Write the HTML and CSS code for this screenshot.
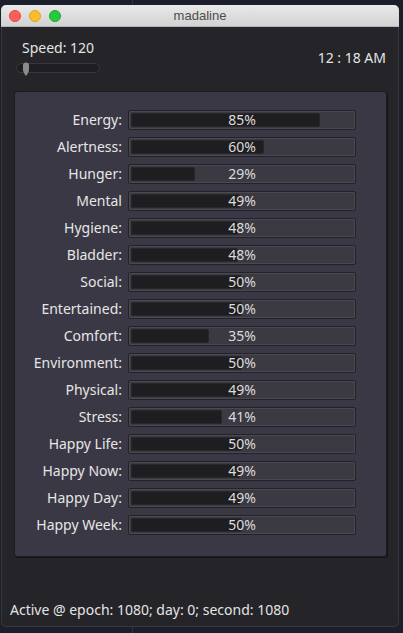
FILE: index.html
```html
<!DOCTYPE html>
<html>
<head>
<meta charset="utf-8">
<link rel="stylesheet" href="styles.css">
</head>
<body>
<div class="window">
  <div class="titlebar">
    <div class="lights">
      <span class="light red"></span>
      <span class="light yellow"></span>
      <span class="light green"></span>
    </div>
    <div class="title">madaline</div>
  </div>
  <div class="content">
    <div class="top">
      <div class="speed">
        <div class="speed-label">Speed: 120</div>
        <div class="slider">
          <svg class="grabber" width="8" height="14" viewBox="0 0 8 14"><path d="M1 3 Q1 0.5 4 0.5 Q7 0.5 7 3 L7 8 Q7 10 4.6 13.5 L3.4 13.5 Q1 10 1 8 Z" fill="#8c8c8f"/></svg>
        </div>
      </div>
      <div class="clock">12 : 18 AM</div>
    </div>
    <div class="panel">
      <div class="label">Energy:</div><div class="bar"><div class="fill" style="width:85%"></div><div class="pct">85%</div></div>
      <div class="label">Alertness:</div><div class="bar"><div class="fill" style="width:60%"></div><div class="pct">60%</div></div>
      <div class="label">Hunger:</div><div class="bar"><div class="fill" style="width:29%"></div><div class="pct">29%</div></div>
      <div class="label">Mental</div><div class="bar"><div class="fill" style="width:49%"></div><div class="pct">49%</div></div>
      <div class="label">Hygiene:</div><div class="bar"><div class="fill" style="width:48%"></div><div class="pct">48%</div></div>
      <div class="label">Bladder:</div><div class="bar"><div class="fill" style="width:48%"></div><div class="pct">48%</div></div>
      <div class="label">Social:</div><div class="bar"><div class="fill" style="width:50%"></div><div class="pct">50%</div></div>
      <div class="label">Entertained:</div><div class="bar"><div class="fill" style="width:50%"></div><div class="pct">50%</div></div>
      <div class="label">Comfort:</div><div class="bar"><div class="fill" style="width:35%"></div><div class="pct">35%</div></div>
      <div class="label">Environment:</div><div class="bar"><div class="fill" style="width:50%"></div><div class="pct">50%</div></div>
      <div class="label">Physical:</div><div class="bar"><div class="fill" style="width:49%"></div><div class="pct">49%</div></div>
      <div class="label">Stress:</div><div class="bar"><div class="fill" style="width:41%"></div><div class="pct">41%</div></div>
      <div class="label">Happy Life:</div><div class="bar"><div class="fill" style="width:50%"></div><div class="pct">50%</div></div>
      <div class="label">Happy Now:</div><div class="bar"><div class="fill" style="width:49%"></div><div class="pct">49%</div></div>
      <div class="label">Happy Day:</div><div class="bar"><div class="fill" style="width:49%"></div><div class="pct">49%</div></div>
      <div class="label">Happy Week:</div><div class="bar"><div class="fill" style="width:50%"></div><div class="pct">50%</div></div>
    </div>
    <div class="footer">Active @ epoch: 1080; day: 0; second: 1080</div>
  </div>
</div>
</body>
</html>
```

FILE: styles.css
```css
html, body {
  margin: 0;
  padding: 0;
}
body {
  width: 403px;
  height: 633px;
  overflow: hidden;
  background:
    linear-gradient(to right, transparent 132px, #2c3242 132px, #2c3242 133px, transparent 133px),
    #1b1f2b;
  font-family: "Noto Sans", "Open Sans", sans-serif;
}
.window {
  margin: 5px 0 0 1px;
  width: 398px;
  height: 622px;
  border-radius: 5px;
  overflow: hidden;
  background: #252429;
  display: flex;
  flex-direction: column;
  box-sizing: border-box;
  box-shadow: inset 0 0 0 1px #38373d;
}
.titlebar {
  height: 22px;
  flex: none;
  background: linear-gradient(#e9e9e9, #d2d2d2);
  border-bottom: 1px solid #b5b5b5;
  box-sizing: border-box;
  display: flex;
  align-items: center;
  position: relative;
}
.lights {
  display: flex;
  gap: 8px;
  padding-left: 8px;
}
.light {
  width: 12px;
  height: 12px;
  border-radius: 50%;
  box-sizing: border-box;
}
.red { background: #fc5f57; border: 1px solid #df4744; }
.yellow { background: #fdbc2e; border: 1px solid #dea123; }
.green { background: #28c840; border: 1px solid #1aab29; }
.title {
  position: absolute;
  left: 0;
  right: 0;
  text-align: center;
  font-family: "Liberation Sans", Arial, sans-serif;
  font-size: 13px;
  color: #4d4d4d;
}
.content {
  flex: 1;
  display: flex;
  flex-direction: column;
  color: #e4e4e4;
  font-size: 14px;
  line-height: 16px;
}
.top {
  display: flex;
  justify-content: space-between;
  align-items: center;
  padding: 13px 13px 0 15px;
}
.speed {
  display: flex;
  flex-direction: column;
  gap: 7px;
}
.speed-label {
  padding-left: 6px;
}
.slider {
  width: 84px;
  height: 10px;
  box-sizing: border-box;
  border-radius: 5px;
  background: #1f1e23;
  border: 1px solid #37363c;
  display: flex;
  align-items: center;
  padding-left: 5px;
}
.grabber {
  margin-top: 1px;
}
.clock {
  margin-top: 3px;
}
.panel {
  margin: 18px 0 0 13px;
  width: 373px;
  box-sizing: border-box;
  background: #3a3844;
  border: 1px solid #1c1b20;
  border-radius: 3px;
  box-shadow: 1px 1px 0 #151418;
  padding: 18px 30px 21px 8px;
  display: grid;
  grid-template-columns: 1fr 228px;
  column-gap: 6px;
  row-gap: 7px;
}
.label {
  text-align: right;
  height: 20px;
  line-height: 19px;
  color: #e6e6e6;
}
.bar {
  height: 20px;
  box-sizing: border-box;
  border: 1px solid #232228;
  border-radius: 2px;
  background: #3b3942;
  box-shadow: inset 0 0 0 1px #4a4850;
  padding: 2px;
  display: grid;
}
.fill {
  grid-area: 1 / 1;
  height: 100%;
  background: #1e1d20;
  border-radius: 3px;
  box-shadow: inset 0 0 0 1px #28272b;
}
.pct {
  grid-area: 1 / 1;
  text-align: center;
  line-height: 14px;
  color: #dcdcdc;
}
.footer {
  margin-top: auto;
  padding: 0 0 9px 9px;
  color: #e4e4e4;
}
```
